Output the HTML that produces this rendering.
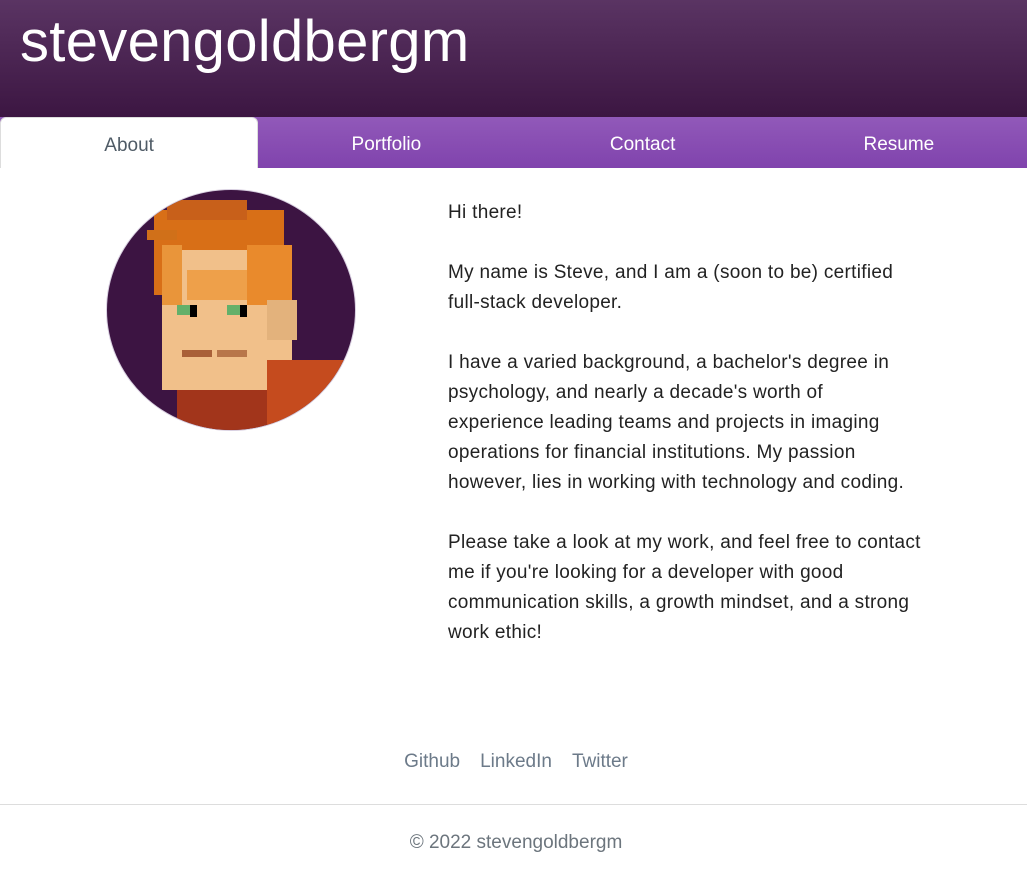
<!DOCTYPE html>
<html><head><meta charset="utf-8"><style>
body{margin:0;width:1027px;height:892px;background:#fff;font-family:"Liberation Sans",sans-serif;overflow:hidden}
.hdr{height:117px;background:linear-gradient(#5a3463,#3c1642);position:relative}
.hdr h1{margin:0;position:absolute;left:20px;top:8px;font-weight:normal;font-size:58px;color:#fff;letter-spacing:0.3px}
.tabs{display:flex;height:51px;background:linear-gradient(#9159b9,#8043ad)}
.tabs div{flex:1;text-align:center;line-height:55px;color:#fff;font-size:19px}
.tabs .a{background:#fff;color:#4f5b66;border-radius:6px 6px 0 0;border:1px solid #ddd;border-bottom:0}
.av{position:absolute;left:106px;top:189px;width:248px;height:240px;border-radius:50%;background:#3c1442;border:1px solid #d8cfe0;overflow:hidden}
.txt{position:absolute;left:448px;top:198px;width:560px;font-size:19px;line-height:30px;color:#222;letter-spacing:0.3px;white-space:nowrap}
.txt p{margin:0 0 30px}
.links{position:absolute;top:751px;left:0;width:1032px;text-align:center;color:#6c7a89;font-size:19px}
.links span{margin:0 10px}
.hr{position:absolute;top:804px;left:0;right:0;border-top:1px solid #ddd}
.copy{position:absolute;top:832px;width:1032px;text-align:center;color:#6c757d;font-size:19px}
</style></head><body>
<div class="hdr"><h1>stevengoldbergm</h1></div>
<div class="tabs"><div class="a">About</div><div>Portfolio</div><div>Contact</div><div>Resume</div></div>
<div class="av"><svg width="248" height="240" viewBox="0 0 248 240">
<rect x="47" y="20" width="130" height="85" fill="#d86f17"/>
<rect x="60" y="10" width="80" height="20" fill="#c8601a"/>
<rect x="40" y="40" width="30" height="10" fill="#d07019"/>
<rect x="55" y="60" width="130" height="140" fill="#f1c08a"/>
<rect x="80" y="80" width="100" height="30" fill="#eea04a"/>
<rect x="55" y="55" width="20" height="60" fill="#e9953a"/>
<rect x="140" y="55" width="45" height="60" fill="#e98a2c"/>
<rect x="160" y="110" width="30" height="40" fill="#e3b27c"/>
<rect x="70" y="115" width="20" height="10" fill="#63b06a"/>
<rect x="120" y="115" width="20" height="10" fill="#63b06a"/>
<rect x="83" y="115" width="7" height="12" fill="#000"/>
<rect x="133" y="115" width="7" height="12" fill="#000"/>
<rect x="70" y="200" width="110" height="40" fill="#a2351b"/>
<rect x="160" y="170" width="90" height="70" fill="#c54b1e"/>
<rect x="75" y="160" width="30" height="7" fill="#a96038"/>
<rect x="110" y="160" width="30" height="7" fill="#b8764a"/>
</svg></div>
<div class="txt">
<p>Hi there!</p>
<p>My name is Steve, and I am a (soon to be) certified<br>full-stack developer.</p>
<p>I have a varied background, a bachelor's degree in<br>psychology, and nearly a decade's worth of<br>experience leading teams and projects in imaging<br>operations for financial institutions. My passion<br>however, lies in working with technology and coding.</p>
<p>Please take a look at my work, and feel free to contact<br>me if you're looking for a developer with good<br>communication skills, a growth mindset, and a strong<br>work ethic!</p>
</div>
<div class="links"><span>Github</span><span>LinkedIn</span><span>Twitter</span></div>
<div class="hr"></div>
<div class="copy">© 2022 stevengoldbergm</div>
</body></html>
